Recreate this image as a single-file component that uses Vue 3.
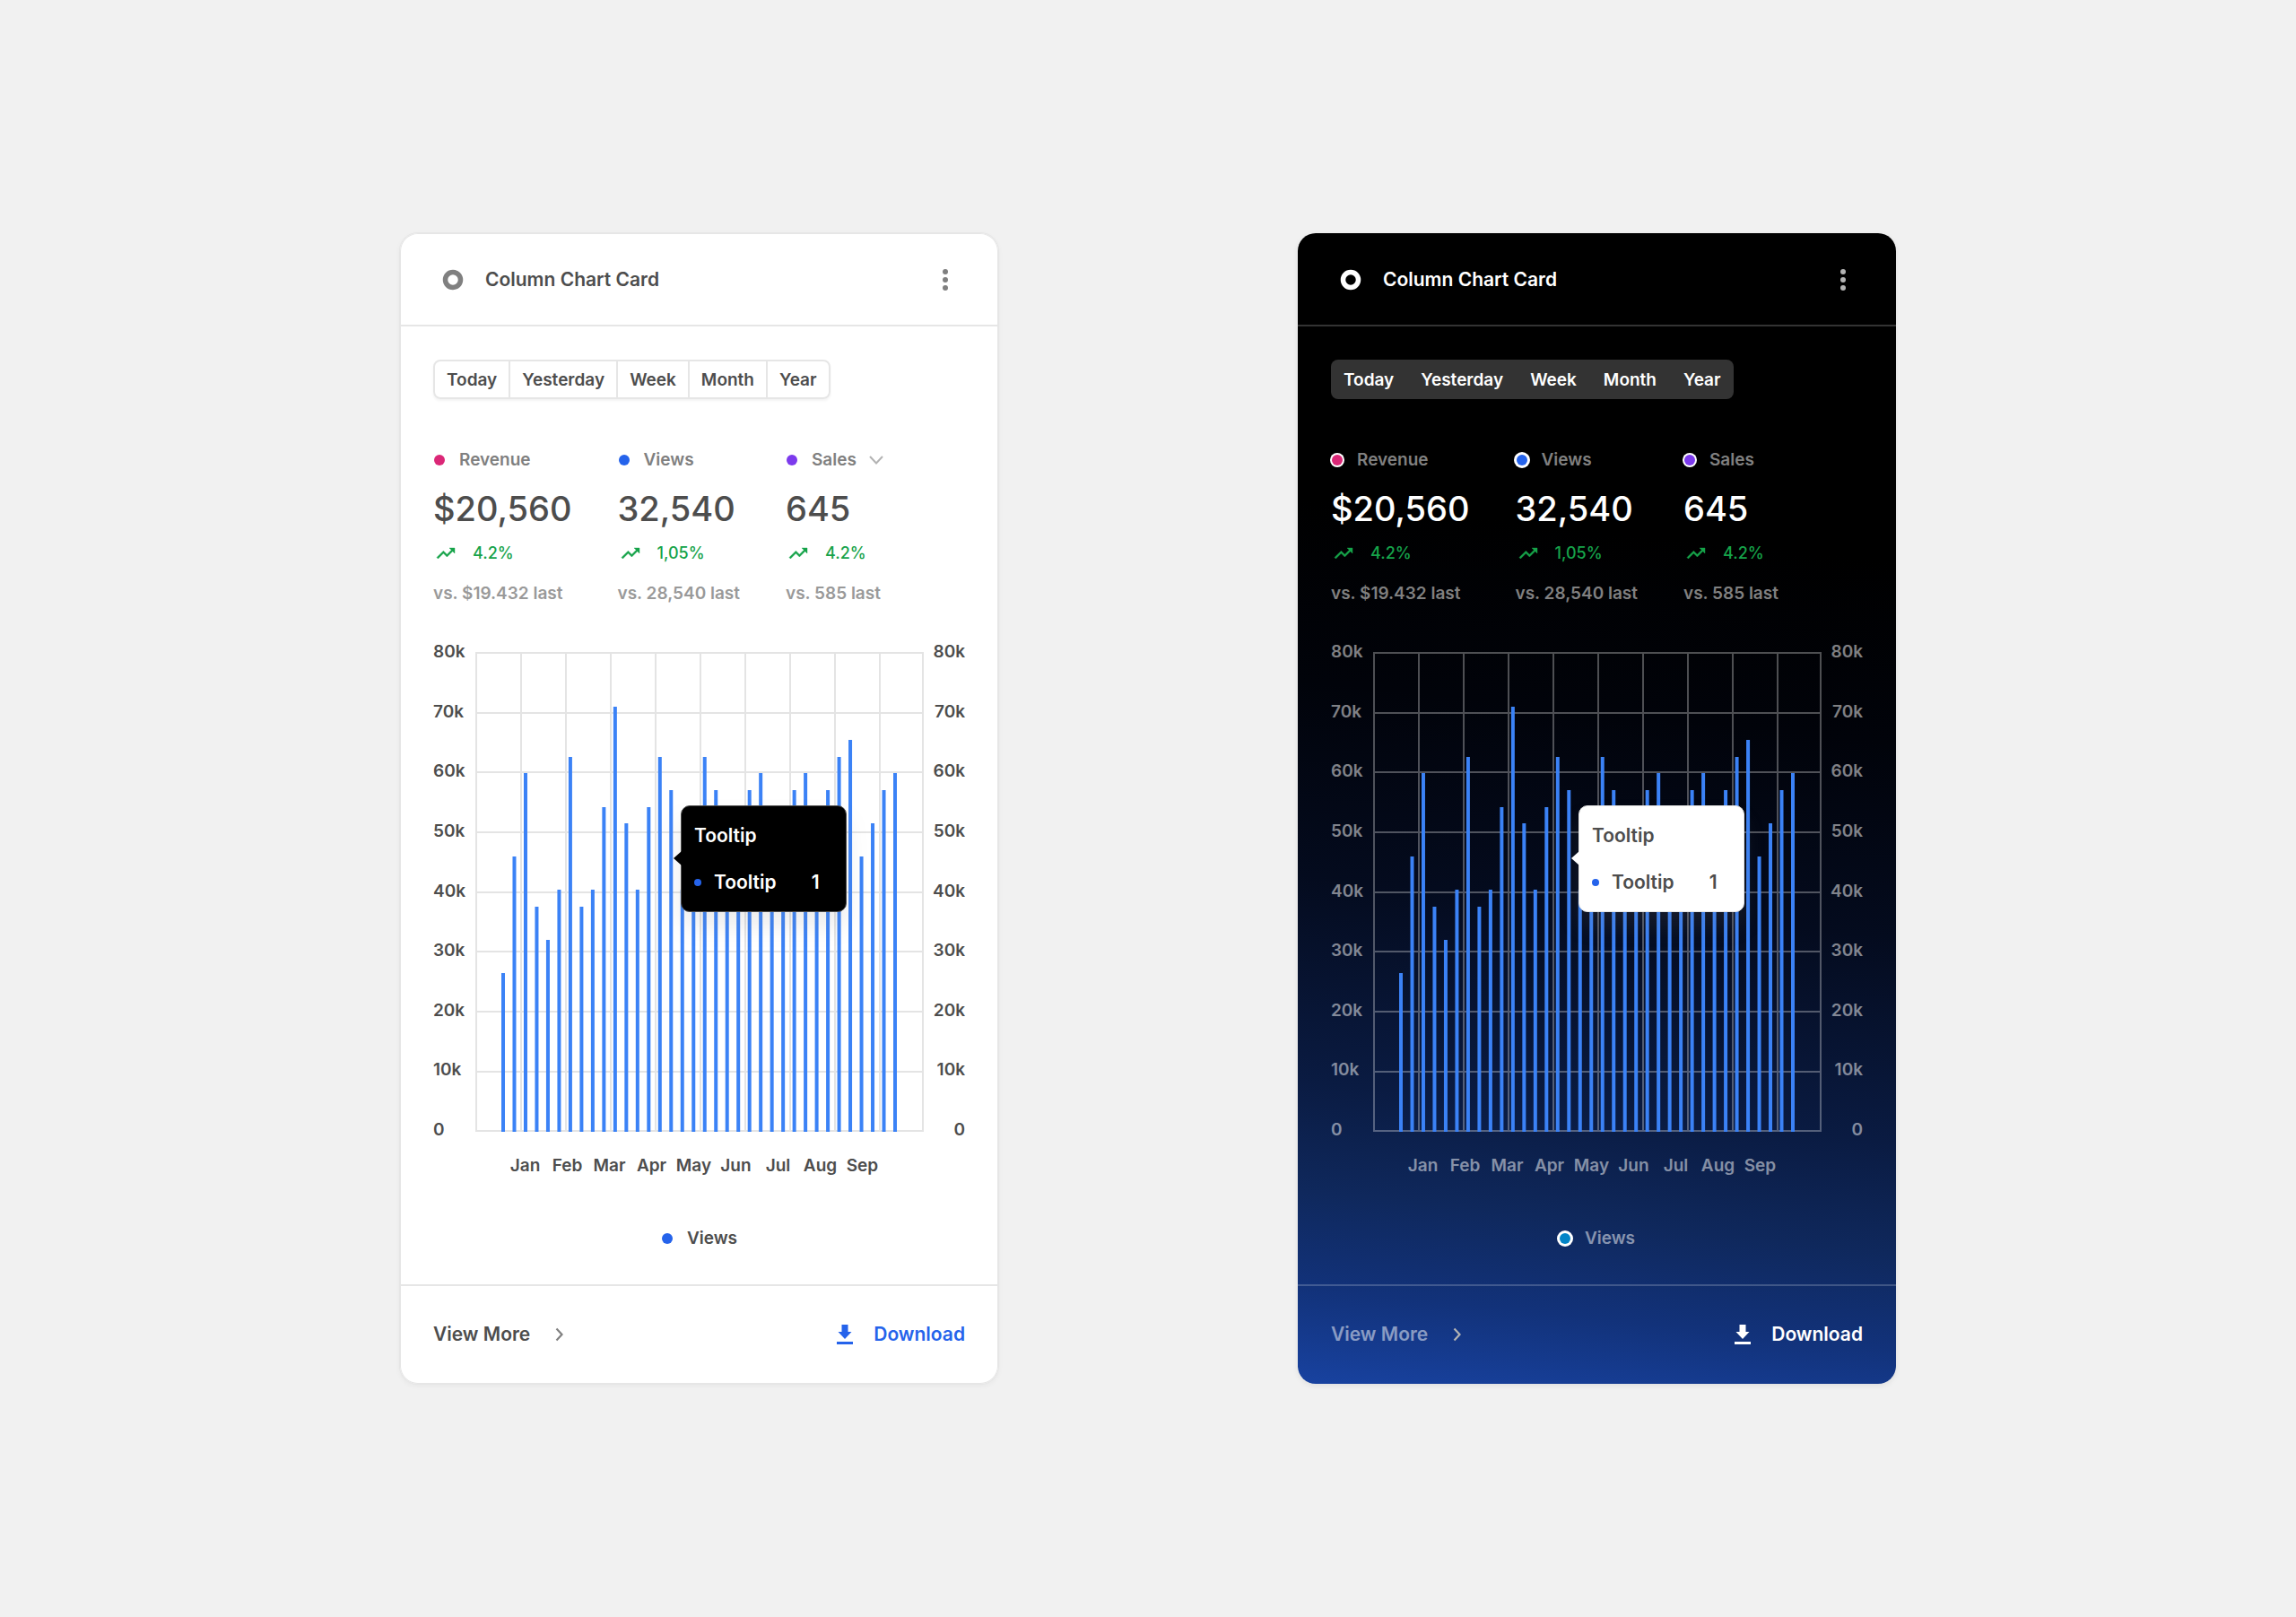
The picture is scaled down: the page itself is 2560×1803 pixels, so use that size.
<script setup>
const tabs = ['Today', 'Yesterday', 'Week', 'Month', 'Year']

const stats = [
  { label: 'Revenue', value: '$20,560', change: '4.2%', previous: 'vs. $19.432 last', tone: 'pink' },
  { label: 'Views', value: '32,540', change: '1,05%', previous: 'vs. 28,540 last', tone: 'blue', active: true },
  { label: 'Sales', value: '645', change: '4.2%', previous: 'vs. 585 last', tone: 'violet', expandable: true },
]

const ticks = ['80k', '70k', '60k', '50k', '40k', '30k', '20k', '10k', '0']
const months = ['Jan', 'Feb', 'Mar', 'Apr', 'May', 'Jun', 'Jul', 'Aug', 'Sep']

const plot = { width: 500, height: 535 }
const rows = ticks.map((_, i) => Math.min(Math.round((i * 200) / 3), 533))
const columns = Array.from({ length: 11 }, (_, i) => Math.min(i * 50, 498))

const heights = [
  177, 307, 400, 251, 214, 270, 418, 251, 270, 362, 474, 344,
  270, 362, 418, 381, 270, 307, 418, 381, 307, 344, 381, 400,
  344, 307, 381, 400, 344, 381, 418, 437, 307, 344, 381, 400,
]
const bars = heights.map((height, i) => ({
  x: 29 + (i * 437) / 35,
  y: plot.height - height,
  height,
}))

const themes = ['light', 'dark']
</script>

<template>
  <main class="page">
    <article v-for="theme in themes" :key="theme" class="card" :class="theme">
      <header class="head">
        <svg class="ring" viewBox="0 0 24 24" aria-hidden="true">
          <circle cx="12" cy="12" r="8.5" fill="none" stroke="currentColor" stroke-width="5.500" />
        </svg>
        <h2 class="title">Column Chart Card</h2>
        <button class="menu" type="button" aria-label="More options">
          <svg viewBox="0 0 8 24" aria-hidden="true">
            <circle cx="4" cy="3" r="3" />
            <circle cx="4" cy="12" r="3" />
            <circle cx="4" cy="21" r="3" />
          </svg>
        </button>
      </header>

      <section class="body">
        <div class="tabs" role="group" aria-label="Period">
          <button v-for="tab in tabs" :key="tab" class="tab" type="button">{{ tab }}</button>
        </div>

        <div class="stats">
          <div v-for="stat in stats" :key="stat.label" class="stat">
            <div class="label">
              <span class="dot" :class="[stat.tone, { active: stat.active }]"></span>
              <span>{{ stat.label }}</span>
              <svg v-if="stat.expandable && theme === 'light'" class="down" viewBox="0 0 16 10" aria-hidden="true">
                <path d="M1 1 8 8.500 15 1" fill="none" stroke="currentColor" stroke-width="2" />
              </svg>
            </div>
            <div class="value">{{ stat.value }}</div>
            <div class="change">
              <svg class="trend" viewBox="0 0 24 24" aria-hidden="true">
                <path d="M16 6l2.290 2.290-4.880 4.880-4-4L2 16.590 3.410 18l6-6 4 4 6.300-6.290L22 12V6z" fill="currentColor" stroke="currentColor" stroke-width=".4" />
              </svg>
              <span>{{ stat.change }}</span>
            </div>
            <div class="previous">{{ stat.previous }}</div>
          </div>
        </div>

        <div class="chart">
          <ul class="axis">
            <li v-for="tick in ticks" :key="tick">{{ tick }}</li>
          </ul>
          <div class="plot">
            <svg class="graph" :viewBox="`0 0 ${plot.width} ${plot.height}`" role="img" aria-label="Views by month">
              <g class="grid">
                <rect v-for="y in rows" :key="'r' + y" x="0" :y="y" :width="plot.width" height="2" />
                <rect v-for="x in columns" :key="'c' + x" :x="x" y="0" width="2" :height="plot.height" />
              </g>
              <g class="bars">
                <rect v-for="bar in bars" :key="bar.x" :x="bar.x" :y="bar.y" width="4" :height="bar.height" />
              </g>
            </svg>
            <div class="tooltip" role="tooltip">
              <strong class="tip-title">Tooltip</strong>
              <div class="tip-row">
                <span class="tip-dot"></span>
                <span class="tip-name">Tooltip</span>
                <span>1</span>
              </div>
            </div>
          </div>
          <ul class="axis end">
            <li v-for="tick in ticks" :key="tick">{{ tick }}</li>
          </ul>
          <ul class="months">
            <li v-for="month in months" :key="month">{{ month }}</li>
          </ul>
        </div>

        <div class="legend">
          <span class="dot blue active"></span>
          <span>Views</span>
        </div>
      </section>

      <footer class="foot">
        <a class="more" href="#">
          <span>View More</span>
          <svg class="next" viewBox="0 0 10 16" aria-hidden="true">
            <path d="M1.500 1.500 7.500 8 1.500 14.500" fill="none" stroke="currentColor" stroke-width="2.200" />
          </svg>
        </a>
        <button class="download" type="button">
          <svg class="save" viewBox="0 0 18 22" aria-hidden="true">
            <path d="M5.500 0h7v8h4L9 16 1.500 8h4z" fill="currentColor" />
            <path d="M0 19h18v3H0z" fill="currentColor" />
          </svg>
          <span>Download</span>
        </button>
      </footer>
    </article>
  </main>
</template>

<style>
body {
  margin: 0;
  background: #f1f1f1;
}
</style>

<style scoped>
.page {
  box-sizing: border-box;
  min-height: 100vh;
  padding: 40px;
  display: flex;
  flex-wrap: wrap;
  justify-content: center;
  align-items: center;
  align-content: center;
  gap: 64px 334px;
  font-family: Inter, "Liberation Sans", sans-serif;
  font-size: 19px;
  font-weight: 600;
  line-height: 24px;
}

button {
  margin: 0;
  padding: 0;
  border: 0;
  background: none;
  font: inherit;
  color: inherit;
}

svg {
  display: block;
  flex: none;
}

ul {
  margin: 0;
  padding: 0;
  list-style: none;
}

.card {
  --line: #e6e6e6;
  --ink: #4d4d4d;
  --label: #808080;
  --muted: #999;
  --axis: #4d4d4d;
  --icon: #808080;
  --link: #2563eb;
  --grid: #000;
  --grid-opacity: 0.1;
  --tip: #000;
  --tip-ink: #fff;
  --tip-line: #4d4d4d;
  box-sizing: border-box;
  width: 100%;
  max-width: 667px;
  display: flex;
  flex-direction: column;
  border-radius: 20px;
  background: #fff;
  color: var(--ink);
  box-shadow: inset 0 0 0 1px #e6e6e6, 0 0 0 1px #e6e6e6, 0 2px 6px rgba(0, 0, 0, 0.05);
}

.card.dark {
  --line: rgba(255, 255, 255, 0.2);
  --ink: #fff;
  --label: #808080;
  --muted: #808080;
  --axis: rgba(255, 255, 255, 0.5);
  --icon: #b3b3b3;
  --link: #fff;
  --grid: #fff;
  --grid-opacity: 0.3;
  --tip: #fff;
  --tip-ink: #4d4d4d;
  --tip-line: #e6e6e6;
  background: linear-gradient(186deg, #000 27%, #01030a 42%, #040b1e 58%, #0a1b42 75%, #0f285c 84%, #12327a 92%, #1842a0 100%);
  box-shadow: 0 2px 6px rgba(0, 0, 0, 0.08);
}

.head {
  display: flex;
  align-items: center;
  height: 100px;
  padding: 2px 51px 0 47px;
  border-bottom: 2px solid var(--line);
}

.ring {
  width: 24px;
  height: 24px;
  color: var(--icon);
}

.dark .ring {
  color: #fff;
}

.title {
  flex: 1;
  margin: 0 0 0 24px;
  font-size: 21px;
  font-weight: 600;
}

.menu {
  width: 16px;
  height: 24px;
  display: flex;
  justify-content: center;
}

.menu svg {
  width: 8px;
  height: 24px;
  fill: var(--icon);
}

.body {
  padding: 37px 37px 39px;
  border-bottom: 2px solid var(--line);
}

.tabs {
  display: flex;
  width: fit-content;
  border: 2px solid #e6e6e6;
  border-radius: 8px;
  box-shadow: 0 2px 3px rgba(0, 0, 0, 0.05);
}

.tab {
  height: 40px;
  padding: 2px 13px 0;
}

.tab + .tab {
  border-left: 2px solid #e6e6e6;
}

.dark .tabs {
  gap: 2px;
  border: 0;
  background: #333;
}

.dark .tab {
  height: 44px;
  padding: 2px 14px 0;
  border: 0;
}

.stats {
  display: flex;
  gap: 51px;
  margin-top: 56px;
}

.label {
  display: flex;
  align-items: center;
  color: var(--label);
}

.dot {
  width: 12px;
  height: 12px;
  margin: 0 16px 0 1px;
  border-radius: 50%;
}

.pink {
  background: #db2777;
}

.blue {
  background: #2563eb;
}

.violet {
  background: #7c3aed;
}

.dark .dot {
  box-shadow: 0 0 0 2px #fff;
}

.dark .dot.active {
  box-shadow: 0 0 0 3px #fff;
}

.down {
  width: 16px;
  height: 10px;
  margin-left: 14px;
  color: #b3b3b3;
}

.value {
  margin-top: 20px;
  font-size: 38px;
  font-weight: 500;
  line-height: 44px;
}

.change {
  display: flex;
  align-items: center;
  gap: 18px;
  margin-top: 16px;
  font-size: 18px;
  font-weight: 500;
  color: #16a34a;
}

.trend {
  width: 24px;
  height: 24px;
  margin-left: 2px;
}

.previous {
  margin-top: 21px;
  color: var(--muted);
}

.chart {
  display: grid;
  grid-template-columns: 47px minmax(0, 1fr) 46px;
  margin-top: 53px;
  color: var(--axis);
}

.axis {
  display: flex;
  flex-direction: column;
  justify-content: space-between;
  margin: -12px 0 -10px;
}

.end {
  text-align: right;
}

.plot {
  position: relative;
}

.graph {
  width: 100%;
  height: auto;
}

.grid {
  fill: var(--grid);
  opacity: var(--grid-opacity);
}

.bars {
  fill: #3b82f6;
}

.tooltip {
  position: absolute;
  left: 229px;
  top: 171px;
  box-sizing: border-box;
  width: 185px;
  height: 119px;
  padding: 21px 14px;
  border: 1px solid var(--tip-line);
  border-radius: 10px;
  background: var(--tip);
  color: var(--tip-ink);
  font-size: 21px;
  box-shadow: 0 16px 24px rgba(128, 128, 128, 0.15);
}

.tooltip::before {
  content: "";
  position: absolute;
  left: -9px;
  top: 50px;
  width: 9px;
  height: 16px;
  background: var(--tip);
  clip-path: polygon(100% 0, 100% 100%, 0 50%);
}

.tip-title {
  display: block;
  font-weight: 600;
}

.tip-row {
  display: flex;
  align-items: center;
  margin-top: 28px;
}

.tip-dot {
  width: 8px;
  height: 8px;
  margin-right: 14px;
  border-radius: 50%;
  background: #2563eb;
}

.tip-name {
  margin-right: 39px;
}

.months {
  grid-column: 2;
  display: grid;
  grid-template-columns: repeat(9, 1fr);
  margin: 26px 45px 0 32px;
  text-align: center;
}

.legend {
  display: flex;
  justify-content: center;
  align-items: center;
  margin-top: 57px;
}

.dark .legend {
  color: var(--axis);
}

.dark .legend .dot {
  background: #0284c7;
}

.foot {
  display: flex;
  justify-content: space-between;
  align-items: center;
  height: 107px;
  padding: 0 37px 2px;
  font-size: 21px;
}

.more {
  display: flex;
  align-items: center;
  gap: 28px;
  color: var(--ink);
  text-decoration: none;
}

.dark .more {
  color: rgba(255, 255, 255, 0.5);
}

.next {
  width: 10px;
  height: 16px;
  color: var(--icon);
}

.download {
  display: flex;
  align-items: center;
  gap: 23px;
  color: var(--link);
}

.save {
  width: 18px;
  height: 22px;
}
</style>
